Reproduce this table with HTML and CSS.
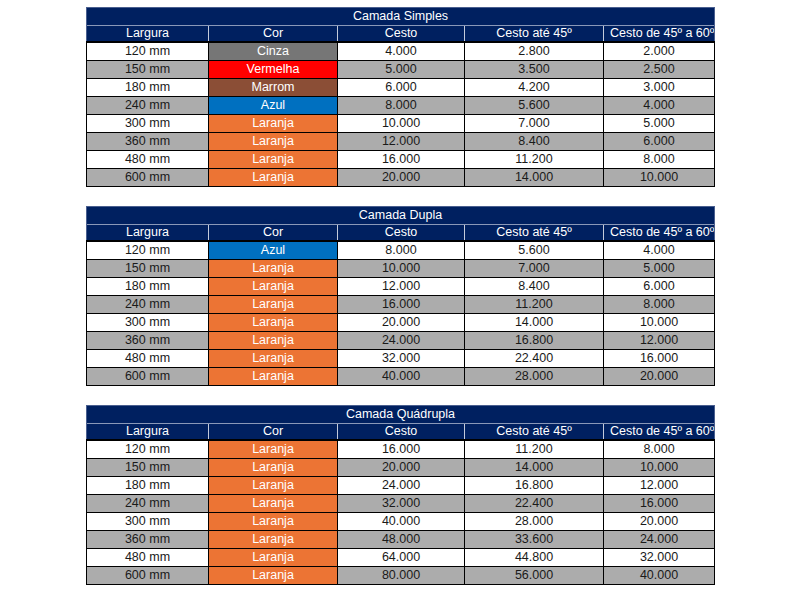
FILE: index.html
```html
<!DOCTYPE html>
<html lang="pt">
<head>
<meta charset="utf-8">
<title>Camadas</title>
<link rel="stylesheet" href="styles.css">
</head>
<body>
<div class="page">
  <table class="tbl">
    <colgroup><col class="c1"><col class="c2"><col class="c3"><col class="c4"><col class="c5"></colgroup>
    <thead>
      <tr class="title"><th colspan="5">Camada Simples</th></tr>
      <tr class="head"><th>Largura</th><th>Cor</th><th>Cesto</th><th>Cesto até 45º</th><th class="last"><span>Cesto de 45º a 60º</span></th></tr>
    </thead>
    <tbody>
      <tr class="w"><td>120 mm</td><td class="cinza">Cinza</td><td>4.000</td><td>2.800</td><td>2.000</td></tr>
      <tr class="g"><td>150 mm</td><td class="verm">Vermelha</td><td>5.000</td><td>3.500</td><td>2.500</td></tr>
      <tr class="w"><td>180 mm</td><td class="marrom">Marrom</td><td>6.000</td><td>4.200</td><td>3.000</td></tr>
      <tr class="g"><td>240 mm</td><td class="azul">Azul</td><td>8.000</td><td>5.600</td><td>4.000</td></tr>
      <tr class="w"><td>300 mm</td><td class="lar">Laranja</td><td>10.000</td><td>7.000</td><td>5.000</td></tr>
      <tr class="g"><td>360 mm</td><td class="lar">Laranja</td><td>12.000</td><td>8.400</td><td>6.000</td></tr>
      <tr class="w"><td>480 mm</td><td class="lar">Laranja</td><td>16.000</td><td>11.200</td><td>8.000</td></tr>
      <tr class="g"><td>600 mm</td><td class="lar">Laranja</td><td>20.000</td><td>14.000</td><td>10.000</td></tr>
    </tbody>
  </table>

  <table class="tbl">
    <colgroup><col class="c1"><col class="c2"><col class="c3"><col class="c4"><col class="c5"></colgroup>
    <thead>
      <tr class="title"><th colspan="5">Camada Dupla</th></tr>
      <tr class="head"><th>Largura</th><th>Cor</th><th>Cesto</th><th>Cesto até 45º</th><th class="last"><span>Cesto de 45º a 60º</span></th></tr>
    </thead>
    <tbody>
      <tr class="w"><td>120 mm</td><td class="azul">Azul</td><td>8.000</td><td>5.600</td><td>4.000</td></tr>
      <tr class="g"><td>150 mm</td><td class="lar">Laranja</td><td>10.000</td><td>7.000</td><td>5.000</td></tr>
      <tr class="w"><td>180 mm</td><td class="lar">Laranja</td><td>12.000</td><td>8.400</td><td>6.000</td></tr>
      <tr class="g"><td>240 mm</td><td class="lar">Laranja</td><td>16.000</td><td>11.200</td><td>8.000</td></tr>
      <tr class="w"><td>300 mm</td><td class="lar">Laranja</td><td>20.000</td><td>14.000</td><td>10.000</td></tr>
      <tr class="g"><td>360 mm</td><td class="lar">Laranja</td><td>24.000</td><td>16.800</td><td>12.000</td></tr>
      <tr class="w"><td>480 mm</td><td class="lar">Laranja</td><td>32.000</td><td>22.400</td><td>16.000</td></tr>
      <tr class="g"><td>600 mm</td><td class="lar">Laranja</td><td>40.000</td><td>28.000</td><td>20.000</td></tr>
    </tbody>
  </table>

  <table class="tbl">
    <colgroup><col class="c1"><col class="c2"><col class="c3"><col class="c4"><col class="c5"></colgroup>
    <thead>
      <tr class="title"><th colspan="5">Camada Quádrupla</th></tr>
      <tr class="head"><th>Largura</th><th>Cor</th><th>Cesto</th><th>Cesto até 45º</th><th class="last"><span>Cesto de 45º a 60º</span></th></tr>
    </thead>
    <tbody>
      <tr class="w"><td>120 mm</td><td class="lar">Laranja</td><td>16.000</td><td>11.200</td><td>8.000</td></tr>
      <tr class="g"><td>150 mm</td><td class="lar">Laranja</td><td>20.000</td><td>14.000</td><td>10.000</td></tr>
      <tr class="w"><td>180 mm</td><td class="lar">Laranja</td><td>24.000</td><td>16.800</td><td>12.000</td></tr>
      <tr class="g"><td>240 mm</td><td class="lar">Laranja</td><td>32.000</td><td>22.400</td><td>16.000</td></tr>
      <tr class="w"><td>300 mm</td><td class="lar">Laranja</td><td>40.000</td><td>28.000</td><td>20.000</td></tr>
      <tr class="g"><td>360 mm</td><td class="lar">Laranja</td><td>48.000</td><td>33.600</td><td>24.000</td></tr>
      <tr class="w"><td>480 mm</td><td class="lar">Laranja</td><td>64.000</td><td>44.800</td><td>32.000</td></tr>
      <tr class="g"><td>600 mm</td><td class="lar">Laranja</td><td>80.000</td><td>56.000</td><td>40.000</td></tr>
    </tbody>
  </table>
</div>
</body>
</html>
```

FILE: styles.css
```css
html, body {
  margin: 0;
  padding: 0;
  background: #ffffff;
}

.page {
  display: flex;
  flex-direction: column;
  align-items: flex-start;
  gap: 19px;
  padding: 7px 0 0 86px;
  font-family: "Liberation Sans", Arial, sans-serif;
  font-size: 12.5px;
  color: #1a1a1a;
}

.tbl {
  border-collapse: collapse;
  table-layout: fixed;
  width: 628px;
}

.c1 { width: 122px; }
.c2 { width: 129px; }
.c3 { width: 127px; }
.c4 { width: 139px; }
.c5 { width: 111px; }

.tbl th,
.tbl td {
  padding: 0;
  text-align: center;
  white-space: nowrap;
  overflow: hidden;
  font-weight: normal;
  line-height: 15px;
}

.title th {
  height: 17px;
  background: #002060;
  color: #ffffff;
  border: 1px solid #4a5f8f;
  border-bottom: none;
}

.head th {
  height: 15px;
  background: #002060;
  color: #ffffff;
  border-left: 1px solid #c4cbdb;
  border-top: 1px solid #8a98b8;
  border-bottom: 2px solid #000000;
}

.head th:first-child { border-left: 1px solid #4a5f8f; }
.head th.last { border-right: 1px solid #4a5f8f; text-align: left; }
.head th.last span { padding-left: 6px; }

.tbl td {
  height: 17px;
  border: 1px solid #000000;
}

.w td { background: #ffffff; }
.g td { background: #acacac; }

.tbl td.cinza { background: #767676; color: #ffffff; }
.tbl td.verm { background: #ff0000; color: #ffffff; }
.tbl td.marrom { background: #8b4e36; color: #ffffff; }
.tbl td.azul { background: #0070c0; color: #ffffff; }
.tbl td.lar { background: #ec7434; color: #ffffff; }
```
